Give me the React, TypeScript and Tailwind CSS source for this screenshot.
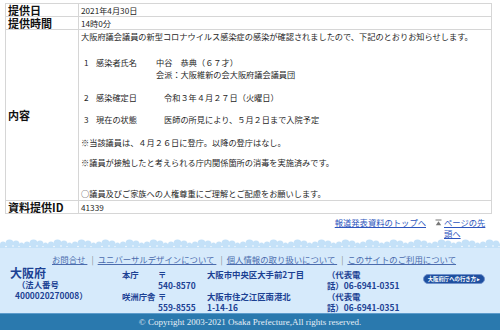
import type { ReactNode } from "react";

const jp = "font-['Noto_Sans_CJK_JP',sans-serif]";

function Row({ label, children }: { label: string; children: ReactNode }) {
  return (
    <tr>
      <th className="w-[73px] border border-[#d6d6d6] px-[2px] text-left align-middle text-[11px] leading-[12px] font-bold text-[#111]">
        {label}
      </th>
      <td className="border border-[#d6d6d6] px-[2px] align-top text-[8.2px] leading-[12px] text-[#262626]">
        {children}
      </td>
    </tr>
  );
}

function Item({ no, label, labelW, children }: { no: string; label: string; labelW: string; children: ReactNode }) {
  return (
    <div className="flex h-[12px] items-center">
      <span className="ml-[3px] w-[12px]">{no}</span>
      <span className={labelW}>{label}</span>
      <span>{children}</span>
    </div>
  );
}

function Wave() {
  return (
    <svg width="500" height="10" viewBox="0 0 500 10" className="block">
      <defs>
        <pattern id="cloud" width="24" height="10" patternUnits="userSpaceOnUse">
          <rect x="0" y="6" width="24" height="4" fill="#c4e1f8" />
          <circle cx="3" cy="6.5" r="3" fill="#c4e1f8" />
          <circle cx="9.5" cy="5.5" r="4" fill="#c4e1f8" />
          <circle cx="16" cy="6" r="3.5" fill="#c4e1f8" />
          <circle cx="21.5" cy="7" r="2.5" fill="#c4e1f8" />
          <circle cx="6" cy="8.5" r="0.8" fill="#ffffff" />
          <circle cx="13" cy="8" r="0.8" fill="#ffffff" />
          <circle cx="19" cy="8.6" r="0.7" fill="#ffffff" />
        </pattern>
      </defs>
      <rect width="500" height="10" fill="url(#cloud)" />
    </svg>
  );
}

const sep = <span className="mx-[4px] text-[#8a8a8a]">|</span>;

export default function App() {
  return (
    <div className={`h-[330px] w-[500px] overflow-hidden bg-white ${jp}`}>
      <div className="pl-[5px] pt-[3px]">
        <table className="w-[487px] border-collapse">
          <tbody>
            <Row label="提供日">2021年4月30日</Row>
            <Row label="提供時間">14時0分</Row>
            <Row label="内容">
              <div className="pb-[1px]">
                <div className="h-[12px]">大阪府議会議員の新型コロナウイルス感染症の感染が確認されましたので、下記のとおりお知らせします。</div>
                <div className="mt-[14px]">
                  <Item no="1" label="感染者氏名" labelW="w-[60px]">中谷　恭典（６７才）</Item>
                </div>
                <div className="h-[12px] pl-[75px]">会派：大阪維新の会大阪府議会議員団</div>
                <div className="mt-[11px]">
                  <Item no="2" label="感染確定日" labelW="w-[68px]">令和３年４月２７日（火曜日）</Item>
                </div>
                <div className="mt-[10px]">
                  <Item no="3" label="現在の状態" labelW="w-[68px]">医師の所見により、５月２日まで入院予定</Item>
                </div>
                <div className="mt-[11px] h-[12px]">※当該議員は、４月２６日に登庁。以降の登庁はなし。</div>
                <div className="mt-[8px] h-[12px]">※議員が接触したと考えられる庁内関係箇所の消毒を実施済みです。</div>
                <div className="mt-[19px] h-[12px]">○議員及びご家族への人権尊重にご理解とご配慮をお願いします。</div>
              </div>
            </Row>
            <Row label="資料提供ID">41339</Row>
          </tbody>
        </table>
      </div>

      <div className="flex h-[24px] justify-end pr-[10px] pt-[3px] text-[8.3px] leading-[10.5px]">
        <a className="text-[#2d55bd] underline">報道発表資料のトップへ</a>
        <svg width="7" height="7" viewBox="0 0 7 7" className="ml-[9px] mt-[2px]">
          <rect x="0.5" y="0.5" width="6" height="1" fill="#777" />
          <path d="M3.5 2.3 L6.2 6.3 L0.8 6.3 Z" fill="#777" />
        </svg>
        <a className="ml-[2px] w-[46px] text-[#2d55bd] underline">ページの先頭へ</a>
      </div>

      <Wave />

      <div className="h-[65px] bg-[#d6eafb]">
        <div className="pl-[52px] pt-[6px] text-[8.4px] leading-[11px] text-[#4b6cae]">
          <a className="underline">お問合せ </a>
          {sep}
          <a className="underline">ユニバーサルデザインについて </a>
          {sep}
          <a className="underline">個人情報の取り扱いについて </a>
          {sep}
          <a className="underline">このサイトのご利用について</a>
        </div>

        <div className="mt-[4px] flex text-[8.4px] leading-[11px] font-bold text-[#1c4193]">
          <div className="w-[122px] pl-[10px]">
            <div className="-mt-[2px] text-[12px] leading-[12px]">大阪府</div>
            <div className="pl-[7px]">（法人番号</div>
            <div className="pl-[5px]">4000020270008）</div>
          </div>
          <div className="grid grid-cols-[36px_49px_120px_96px]">
            <div>本庁</div>
            <div>〒<br />540-8570</div>
            <div>大阪市中央区大手前2丁目</div>
            <div>（代表電<br />話）06-6941-0351</div>
            <div>咲洲庁舎</div>
            <div>〒<br />559-8555</div>
            <div>大阪市住之江区南港北<br />1-14-16</div>
            <div>（代表電<br />話）06-6941-0351</div>
          </div>
          <div className="pt-[5px]">
            <span className="flex h-[10px] w-[62px] items-center justify-center rounded-full border border-[#6f91cc] bg-[#1e4f9f] text-[5.4px] leading-[8px] font-bold text-white">
              大阪府庁への行き方 ▸
            </span>
          </div>
        </div>
      </div>

      <div className="flex h-[18px] items-center justify-center border-t border-[#5d9ccc] bg-[#2a79ae] font-['Liberation_Serif',serif] text-[9px] text-[#e6eef6]">
        © Copyright 2003-2021 Osaka Prefecture,All rights reserved.
      </div>
    </div>
  );
}
